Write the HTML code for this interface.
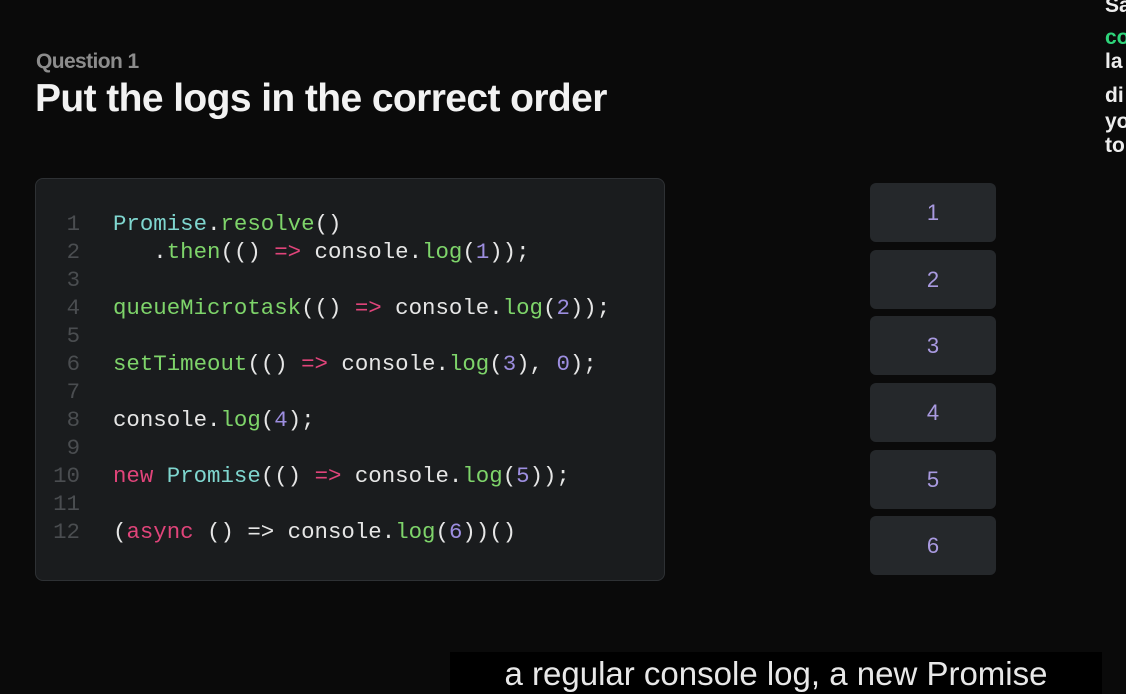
<!DOCTYPE html>
<html><head><style>
body{margin:0;width:1126px;height:679px;background:#0a0a0a;overflow:hidden;position:relative;font-family:"Liberation Sans",sans-serif}
.q{position:absolute;left:36px;top:50px;color:#8c8c8c;font-size:21px;font-weight:bold;letter-spacing:-0.6px}
.t{position:absolute;left:35px;top:77px;color:#f2f2f2;font-size:39px;font-weight:bold;letter-spacing:-0.6px}
.box{position:absolute;left:35px;top:178px;width:628px;height:401px;background:#1a1c1e;border:1.5px solid #2e3134;border-radius:8px}
.code{position:absolute;left:0;top:210px;font-family:"Liberation Mono",monospace;font-size:22.4px;line-height:28px;color:#e6e6e6;white-space:pre}
.ln{position:absolute;left:50px;width:30px;text-align:right;color:#4a4d50}
.c{position:absolute;left:113px}
.b{color:#7fd6cf}.g{color:#7ed46a}.p{color:#e0447a}.n{color:#9d8ee0}
.btn{position:absolute;left:870px;width:126px;height:59px;background:#25282b;border-radius:6px;color:#a99ae0;font-size:22px;text-align:center;line-height:59px}
.side{position:absolute;left:1105px;color:#eee;font-size:21px;font-weight:bold;line-height:24px}
.cap{position:absolute;left:450px;top:652px;width:652px;height:40px;background:#000;color:#e8e8e8;font-size:33px;line-height:40px;text-align:center;padding-top:2px}
</style></head><body>
<div class="q">Question 1</div>
<div class="t">Put the logs in the correct order</div>
<div class="box"></div>
<div class="code">
<div class="ln" style="top:0">1</div><div class="c" style="top:0"><span class="b">Promise</span>.<span class="g">resolve</span>()</div>
<div class="ln" style="top:28px">2</div><div class="c" style="top:28px">   .<span class="g">then</span>(() <span class="p">=&gt;</span> console.<span class="g">log</span>(<span class="n">1</span>));</div>
<div class="ln" style="top:56px">3</div>
<div class="ln" style="top:84px">4</div><div class="c" style="top:84px"><span class="g">queueMicrotask</span>(() <span class="p">=&gt;</span> console.<span class="g">log</span>(<span class="n">2</span>));</div>
<div class="ln" style="top:112px">5</div>
<div class="ln" style="top:140px">6</div><div class="c" style="top:140px"><span class="g">setTimeout</span>(() <span class="p">=&gt;</span> console.<span class="g">log</span>(<span class="n">3</span>), <span class="n">0</span>);</div>
<div class="ln" style="top:168px">7</div>
<div class="ln" style="top:196px">8</div><div class="c" style="top:196px">console.<span class="g">log</span>(<span class="n">4</span>);</div>
<div class="ln" style="top:224px">9</div>
<div class="ln" style="top:252px">10</div><div class="c" style="top:252px"><span class="p">new</span> <span class="b">Promise</span>(() <span class="p">=&gt;</span> console.<span class="g">log</span>(<span class="n">5</span>));</div>
<div class="ln" style="top:280px">11</div>
<div class="ln" style="top:308px">12</div><div class="c" style="top:308px">(<span class="p">async</span> () =&gt; console.<span class="g">log</span>(<span class="n">6</span>))()</div>
</div>
<div class="btn" style="top:183px">1</div>
<div class="btn" style="top:250px">2</div>
<div class="btn" style="top:316px">3</div>
<div class="btn" style="top:383px">4</div>
<div class="btn" style="top:450px">5</div>
<div class="btn" style="top:516px">6</div>
<div class="side" style="top:-6px">Sa</div>
<div class="side" style="top:26px;color:#2ed47a">co</div>
<div class="side" style="top:50px">la</div>
<div class="side" style="top:84px">di</div>
<div class="side" style="top:110px">yo</div>
<div class="side" style="top:134px">to</div>
<div class="cap">a regular console log, a new Promise</div>
</body></html>
